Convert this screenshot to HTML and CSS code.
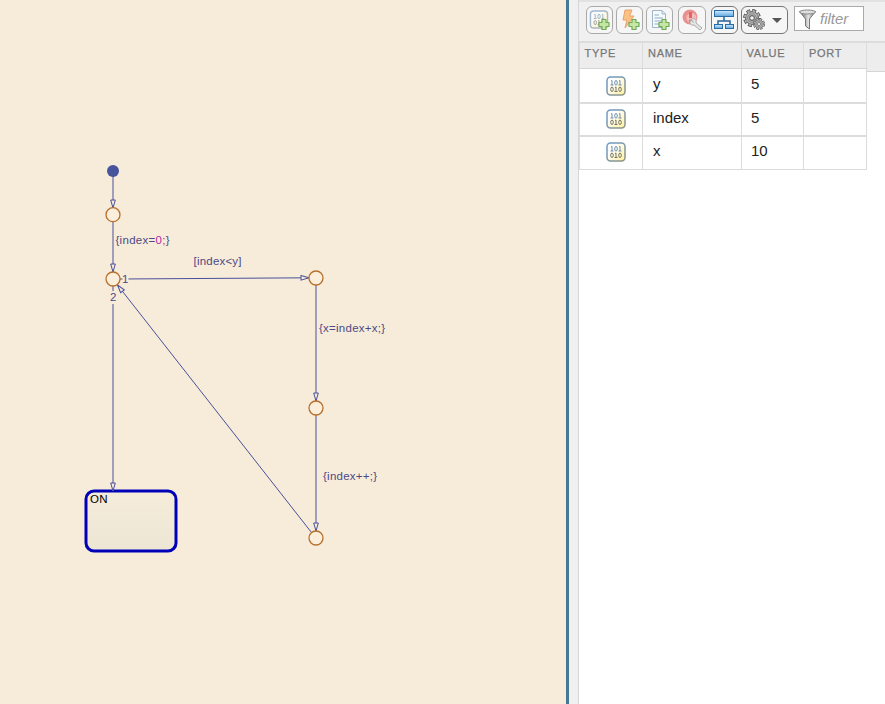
FILE: index.html
```html
<!DOCTYPE html>
<html lang="en">
<head>
<meta charset="utf-8">
<title>Chart and symbols</title>
<link rel="stylesheet" href="styles.css">
</head>
<body>
<main class="app">
  <section class="canvas">
    <svg width="566" height="704" viewBox="0 0 566 704">
      <defs>
        <linearGradient id="stateFill" x1="0" y1="0" x2="0" y2="1"><stop offset="0" stop-color="#f5ecda"/><stop offset="1" stop-color="#eee6d4"/></linearGradient>
        <marker id="arrow" viewBox="0 0 10 6" refX="9" refY="3" markerWidth="10" markerHeight="6" markerUnits="userSpaceOnUse" orient="auto"><path class="head" d="M1 .7L9 3L1 5.3Z"/></marker>
      </defs>
      <rect class="state" x="86" y="491" width="90" height="60" rx="8"/>
      <g class="wires">
        <path d="M113 171V208"/>
        <path d="M113 222V272"/>
        <path d="M120 279L309 277.8"/>
        <path d="M316 285V401"/>
        <path d="M316 415V531"/>
        <path d="M311.5 532.5L117.5 285"/>
        <path d="M113 286V491"/>
      </g>
      <rect class="gap" x="122.500" y="273" width="6" height="12"/>
      <rect class="gap" x="108" y="291" width="10" height="13"/>
      <circle class="start" cx="113" cy="171" r="6"/>
      <g class="junctions">
        <circle cx="113" cy="214.700" r="7"/>
        <circle cx="113" cy="279" r="7"/>
        <circle cx="316" cy="278" r="7"/>
        <circle cx="316" cy="408" r="7"/>
        <circle cx="316" cy="538" r="7"/>
      </g>
      <g class="labels">
        <text x="115.500" y="244" textLength="54">{index=<tspan class="literal">0;</tspan>}</text>
        <text x="193.500" y="265" textLength="48">[index&lt;y]</text>
        <text x="319" y="332" textLength="66">{x=index+x;}</text>
        <text x="323" y="480" textLength="54">{index++;}</text>
        <text x="122" y="283">1</text>
        <text x="110" y="301">2</text>
        <text class="name" x="90" y="503" textLength="17.500">ON</text>
      </g>
    </svg>
  </section>
  <div class="splitter"></div>
  <aside class="symbols">
    <svg class="sprites" width="0" height="0">
      <defs>
        <linearGradient id="dataFill" x1="0" y1="0" x2="1" y2="1"><stop offset="0.300" stop-color="#fff"/><stop offset="1" stop-color="#fff09a"/></linearGradient>
        <linearGradient id="dataEdge" x1="0" y1="0" x2="1" y2="1"><stop offset="0" stop-color="#6c9bc9"/><stop offset="1" stop-color="#8f9480"/></linearGradient>
        <linearGradient id="blueFill" x1="0" y1="0" x2="0" y2="1"><stop offset="0" stop-color="#d2ebff"/><stop offset="1" stop-color="#5da5df"/></linearGradient>
        <linearGradient id="metal"><stop offset="0" stop-color="#777"/><stop offset=".35" stop-color="#aaa"/><stop offset=".55" stop-color="#e6e6e6"/><stop offset="1" stop-color="#777"/></linearGradient>
        <symbol id="bits" viewBox="0 0 20 20">
          <rect x="1" y="1" width="18" height="18" rx="3.500" fill="url(#dataFill)" stroke="url(#dataEdge)" stroke-width="1.500"/>
          <g fill="none" stroke-width=".9"><g stroke="#5d84ad"><path d="M5 5L6 4.500V9M4.500 9H7.500M13 5L14 4.500V9M12.500 9H15.500"/><ellipse cx="10" cy="6.800" rx="1.300" ry="2.300"/></g><g stroke="#66675e"><path d="M9 11.500L10 11V15.500M8.500 15.500H11.500"/><ellipse cx="6" cy="13.300" rx="1.300" ry="2.200"/><ellipse cx="14" cy="13.300" rx="1.300" ry="2.200"/></g></g>
        </symbol>
        <symbol id="plus" viewBox="0 0 12 12"><path d="M4 1H8V4H11V8H8V11H4V8H1V4H4Z" fill="#c5e6a4" stroke="#70ab58" stroke-width="1.200" stroke-linejoin="round"/></symbol>
        <symbol id="gear" viewBox="0 0 20 20"><circle cx="10" cy="10" r="8" fill="none" stroke="#555" stroke-width="3.800" stroke-dasharray="4.200 2.080"/><circle cx="10" cy="10" r="7.200" fill="#b4b4b4" stroke="#555" stroke-width="1"/><circle cx="10" cy="10" r="8" fill="none" stroke="#b4b4b4" stroke-width="2" stroke-dasharray="2.800 3.480" stroke-dashoffset="-.7"/><circle cx="10" cy="10" r="4.600" fill="#ccc" stroke="#777" stroke-width="1"/><circle cx="10" cy="10" r="2.600" fill="#f4f4f4" stroke="#666" stroke-width="1.200"/></symbol>
      </defs>
    </svg>
    <header class="toolbar">
      <button class="tool data"><svg width="26" height="26"><g opacity=".65"><use href="#bits" x="2" y="3" width="20" height="19"/></g><use href="#plus" x="11" y="11.500" width="12" height="12"/></svg></button>
      <button class="tool event"><svg width="26" height="26"><path d="M8 3H15L12.500 9H17L8 21L10 13H6Z" fill="#f9c382" stroke="#eda06f"/><use href="#plus" x="11" y="11.500" width="12" height="12"/></svg></button>
      <button class="tool message"><svg width="26" height="26"><path d="M5.500 3.500H15L18.500 7V20.500H5.500Z" fill="#f5faff" stroke="#9fb5c9"/><path d="M15 4V7H18" fill="none" stroke="#9fb5c9"/><path d="M7.500 8H12M7.500 11H16M7.500 14H16M7.500 17H12" stroke="#91aabf"/><use href="#plus" x="11" y="11.500" width="12" height="12"/></svg></button>
      <button class="tool resolve"><svg width="28" height="26"><circle cx="11" cy="10" r="7.500" fill="#e99090"/><circle cx="12.500" cy="11" r="5" fill="#f4bbb8"/><path d="M11.500 5V11" stroke="#df6568" stroke-width="3"/><circle cx="11.500" cy="14" r="1.600" fill="#df6568"/><path d="M12 13C14 10 18 12 17 16L23 21L21 23L15 18C11 19 10 15 12 13L14.500 15Z" fill="#e6e6e6" stroke="#aaa"/></svg></button>
      <button class="tool tree active"><svg width="26" height="26"><path d="M12 10V14M6 18V14H18V18" fill="none" stroke="#276499" stroke-width="1.500"/><g fill="url(#blueFill)" stroke="#286da8"><rect x="2.500" y="3.500" width="19" height="6"/><rect x="2.500" y="17.500" width="8" height="4"/><rect x="13.500" y="17.500" width="8" height="4"/></g></svg></button>
      <button class="tool settings active"><svg width="45" height="26"><use href="#gear" x="1" y="2" width="18" height="18"/><use href="#gear" x="11" y="11" width="12" height="12"/><path d="M30 11H40L35 16Z" fill="#555"/></svg></button>
      <label class="filter"><svg width="20" height="24"><path d="M1.500 4.500L7.500 12V19L11.500 22V12L17.500 4.500Z" fill="url(#metal)" stroke="#777"/><ellipse cx="9.500" cy="5" rx="8" ry="2" fill="#dedede" stroke="#888"/></svg><span>filter</span></label>
    </header>
    <div class="tablewrap">
      <div class="grid">
        <div class="row head"><span>TYPE</span><span>NAME</span><span>VALUE</span><span>PORT</span></div>
        <div class="row first"><span class="kind"><svg width="20" height="20"><use href="#bits"/></svg></span><span>y</span><span>5</span><span></span></div>
        <div class="row"><span class="kind"><svg width="20" height="20"><use href="#bits"/></svg></span><span>index</span><span>5</span><span></span></div>
        <div class="row last"><span class="kind"><svg width="20" height="20"><use href="#bits"/></svg></span><span>x</span><span>10</span><span></span></div>
      </div>
      <div class="headfill"></div>
    </div>
  </aside>
</main>
</body>
</html>
```
FILE: styles.css
```css
* { box-sizing: border-box; }
body { margin: 0; font-family: "Liberation Sans", Arial, sans-serif; }
.app { display: flex; width: 885px; height: 704px; overflow: hidden; background: #fff; }
.canvas { width: 566px; background: #f7ecda; }
.canvas svg, .tool svg, .filter svg, .kind svg { display: block; flex: none; }
.state { fill: url(#stateFill); stroke: #0000b8; stroke-width: 3; }
.wires path { fill: none; stroke: #48509a; stroke-width: 1; marker-end: url(#arrow); }
.head { fill: #f7ecda; stroke: #48509a; stroke-width: 1; }
.gap { fill: #f7ecda; }
.start { fill: #47539b; }
.junctions circle { fill: #fbefdc; stroke: #b7702b; stroke-width: 1.3; }
.labels { font-size: 11.5px; fill: #4d4985; }
.literal { fill: #b42aa4; }
.name { fill: #000; }
.splitter { width: 13px; background: #f0f0f0; border-left: 3px solid #467896; border-right: 1px solid #d6d6d6; }
.symbols { width: 306px; }
.sprites { position: absolute; }
.toolbar { display: flex; align-items: flex-start; height: 41px; padding: 4px 0 0 7px; background: #f0f0f0; border-top: 2px solid #e2e2e2; }
.tool { display: flex; width: 27px; height: 28px; padding: 0; border: 1px solid #aaa; border-radius: 6px; background: #f6f6f6; margin-right: 3px; }
.tool.message { margin-right: 5px; }
.tool.resolve { width: 28px; margin-right: 5px; }
.tool.active { border-color: #777; }
.tool.settings { width: 47px; margin-right: 6px; }
.filter { display: flex; width: 70px; height: 25px; border: 1px solid #aaa; background: #fff; padding-left: 3px; color: #999; font: italic 15px/24px "Liberation Sans", Arial, sans-serif; }
.filter span { margin-left: 2px; }
.tablewrap { display: flex; }
.grid { width: 288px; border-left: 1px solid #dcdcdc; }
.headfill { flex: 1; height: 31px; background: #ededed; border-top: 2px solid #dcdcdc; border-bottom: 1px solid #d5d5d5; }
.row { display: grid; grid-template-columns: 63px 99px 62px 63px; height: 33px; font-size: 15px; line-height: 27px; color: #222; border-bottom: 2px solid #dcdcdc; }
.row span { border-right: 1px solid #dcdcdc; padding-left: 10px; }
.row span:nth-child(3) { padding-left: 9px; }
.row .kind { padding: 5px 0 0 26px; }
.row.first { height: 35px; line-height: 29px; }
.row.first .kind { padding-top: 7px; }
.row.last { border-bottom-width: 1px; }
.row.head { height: 28px; background: #ededed; border-top: 2px solid #dcdcdc; border-bottom: 1px solid #d5d5d5; font-size: 11px; line-height: 21px; letter-spacing: .7px; color: #777; -webkit-text-stroke: .25px #777; }
.row.head span { padding-left: 5px; }
.row.head span:first-child, .row.head span:nth-child(3) { padding-left: 4.5px; }
```
